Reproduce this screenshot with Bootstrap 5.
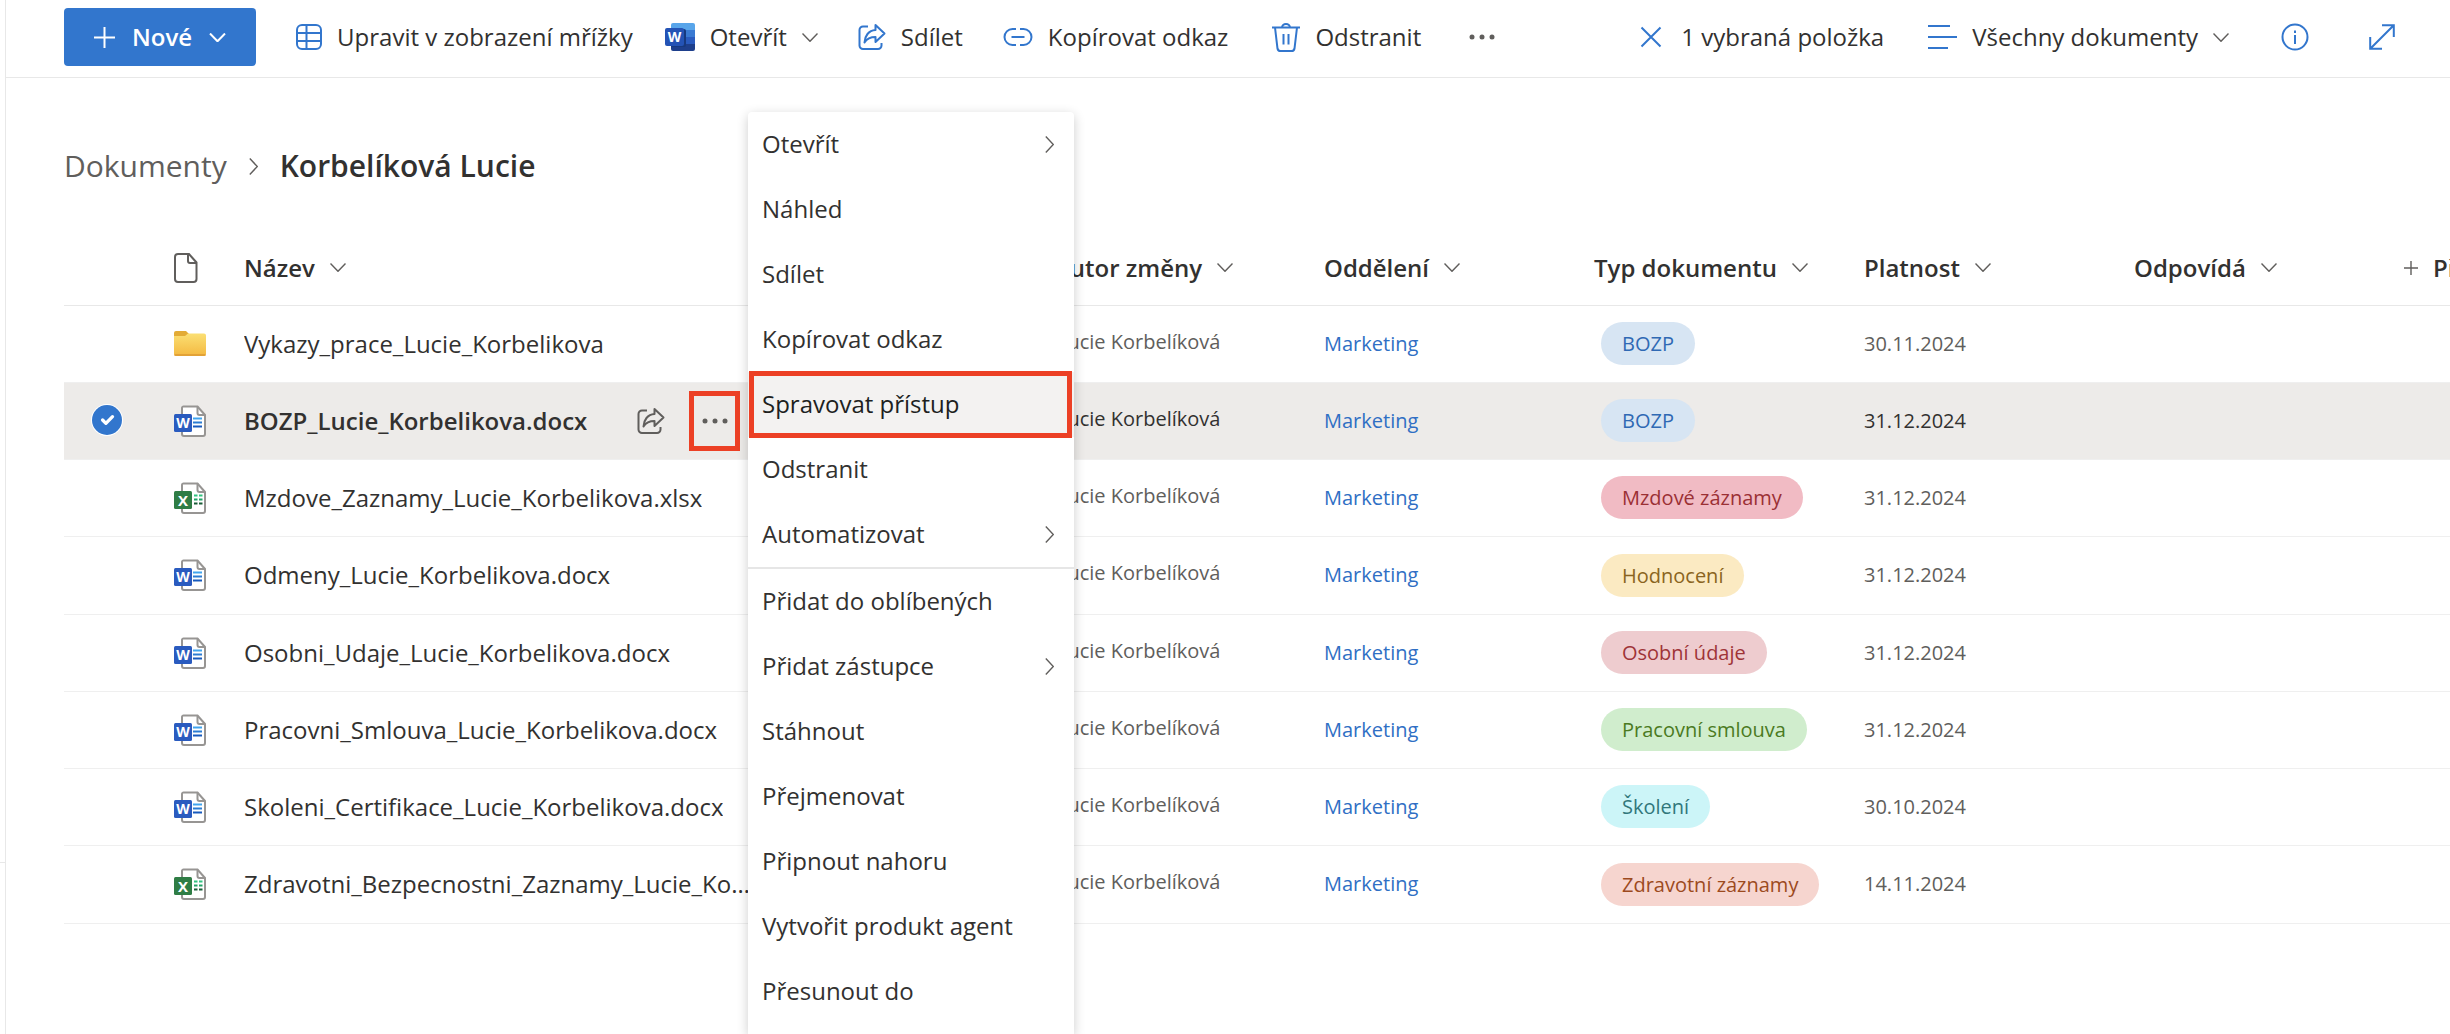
<!DOCTYPE html>
<html lang="cs">
<head>
<meta charset="utf-8">
<meta name="viewport" content="width=device-width, initial-scale=1">
<title>Dokumenty – Korbelíková Lucie</title>
<link href="https://cdn.jsdelivr.net/npm/bootstrap@5.3.0/dist/css/bootstrap.min.css" rel="stylesheet">
<style>
  :root { --accent: #3276cd; --ink: #323130; --ink-soft: #605e5c; --line: #e8e8e8; --callout: #ec4025; }
  body { font-family: "Open Sans", "Noto Sans", sans-serif; font-size: 24px; line-height: 32px; color: var(--ink); background: #fff; }
  svg { display: block; flex: none; overflow: visible; fill: none; stroke: currentColor; stroke-width: 2; }
  .rail { width: 6px; border-right: 1px solid var(--line); }
  .rail-foot { height: 172px; border-top: 1px solid var(--line); }
  .cmdbar { height: 78px; padding: 8px 55px 11px 58px; border-bottom: 1px solid var(--line); font-size: 24px; }
  .cmd { display: flex; align-items: center; gap: 15px; padding: 0; border: 0; background: none; color: var(--ink); white-space: nowrap; }
  .cmd > svg:first-child { color: var(--accent); }
  .chev, .cmd > .chev { color: var(--ink-soft); stroke-width: 1.4; }
  .cmd > .dots:first-child { color: var(--ink-soft); }
  .btn-new { height: 58px; padding: 0 30px; gap: 17px; border-radius: 4px; background: var(--accent); color: #fff; font-weight: 600; }
  .btn-new > svg:first-child, .btn-new > .chev { color: #fff; stroke-width: 2; }
  .cmd-count { gap: 20px; margin-right: 28px; }
  .cmd-view { margin-right: 52px; }
  .cmd-info { margin-right: 60px; }
  .crumbs { padding: 66px 58px 43px; font-size: 30px; line-height: 44px; gap: 22px; }
  .crumbs a { color: var(--ink-soft); text-decoration: none; }
  .files { table-layout: fixed; width: 100%; margin-left: 58px; border-collapse: collapse; white-space: nowrap; }
  .files th, .files td { padding: 0; border-bottom: 1px solid #efefef; vertical-align: middle; }
  .files th { height: 74px; font-weight: 600; border-color: var(--line); }
  .files td { height: 77px; font-size: 20px; color: var(--ink-soft); }
  .files tr:nth-child(4n) td { height: 78px; }
  .files .picked td { background: #edebe9; color: var(--ink); }
  .files a { color: #2f6fc4; text-decoration: none; }
  .col-check { width: 85px; } .col-kind { width: 95px; } .col-title { width: 810px; } .col-meta { width: 270px; }
  .th-in { display: flex; align-items: center; gap: 15px; }
  .title-in { display: flex; align-items: center; width: 508px; font-size: 24px; color: var(--ink); }
  .picked .fname { font-weight: 600; }
  .files td.who { padding: 0 0 4px 3px; }
  .kind { margin-left: 25px; }
  .form-check-input.tick { width: 30px; height: 30px; margin: 0 0 2px 28px; border: 0; border-radius: 50%; display: block; box-shadow: 0 0 0 1px #fff; }
  .form-check-input.tick:checked { background-color: var(--accent); background-size: 22px; }
  .icon-btn { padding: 0; border: 0; background: none; color: var(--ink-soft); }
  .called { width: 51px; height: 60px; margin: 0 12px 0 24px; border: 5px solid var(--callout); display: flex; align-items: center; justify-content: center; }
  .pill { display: inline-block; margin-left: 7px; padding: 6px 21px 5px; border-radius: 22px; line-height: 32px; }
  .p-blue { background: #d7e5f3; color: #2f69b4; } .p-pink { background: #f1bbc4; color: #9b3034; }
  .p-gold { background: #fbeac2; color: #8a6420; } .p-rose { background: #eecccf; color: #9f3437; }
  .p-green { background: #d0edcd; color: #4b7a22; } .p-aqua { background: #ccf5f8; color: #31777b; }
  .p-coral { background: #f6d5cf; color: #9c4a1e; }
  .ctx { position: absolute; left: 748px; top: 112px; bottom: 0; width: 326px; background: #fff; border-radius: 4px 4px 0 0; box-shadow: 0 3px 12px rgba(0,0,0,.2); }
  .ctx button { position: relative; display: flex; align-items: center; justify-content: space-between; width: 100%; height: 65px; padding: 0 20px 1px 14px; border: 0; background: none; color: var(--ink); text-align: left; white-space: nowrap; }
  .ctx hr { margin: 0; border: 0; border-top: 2px solid #e6e6e6; opacity: 1; }
  .ctx button.hot { background: #f3f2f1; color: #201f1e; }
  .ctx button.hot::after { content: ""; position: absolute; inset: -1px 2px -1px 1px; border: 5px solid var(--callout); }
</style>
<script src="https://cdn.jsdelivr.net/npm/bootstrap@5.3.0/dist/js/bootstrap.bundle.min.js"></script>
</head>
<body class="overflow-hidden">
<svg class="d-none" aria-hidden="true">
  <symbol id="i-down" viewBox="0 0 16 9"><path d="M.5.5 8 8.300 15.500.5"/></symbol>
  <symbol id="i-right" viewBox="0 0 9 17"><path d="M.8.5 8.300 8.500.8 16.500"/></symbol>
  <symbol id="i-share" viewBox="0 0 28 26"><path d="M10 2.500H5A3.500 3.500 0 0 0 1.500 6v15.500A3.500 3.500 0 0 0 5 25h15a3.500 3.500 0 0 0 3.500-3.500V19M17.500 1l9 8.500-9 8.500v-5c-5 0-8.500 1.500-11 5.500.3-6.500 4-12 11-12.500z" stroke-linejoin="round"/></symbol>
  <symbol id="i-doc" viewBox="0 0 32 32"><path d="M10 1.500h13.500L31 10v19a2 2 0 0 1-2 2H10a2 2 0 0 1-2-2V3a1.500 1.500 0 0 1 2-1.500z" fill="#fff" stroke="#979593"/><path d="M23.500 1.500V8a2 2 0 0 0 2 2H31" stroke="#979593"/></symbol>
  <symbol id="i-word" viewBox="0 0 32 32"><use href="#i-doc"/><path d="M19 13.500h9" stroke="#41a5ee"/><path d="M19 17.500h9" stroke="#2b7cd3"/><path d="M19 21.500h9" stroke="#185abd"/><rect y="9" width="18" height="18" rx="1.500" fill="#2a5bbf" stroke="none"/><text x="9" y="23" font-family="Open Sans" font-size="14" font-weight="700" text-anchor="middle" fill="#fff" stroke="none">W</text></symbol>
  <symbol id="i-excel" viewBox="0 0 32 32"><use href="#i-doc"/><path d="M20 13.500h3.500M25 13.500h3.500" stroke="#33c481"/><path d="M20 17.500h3.500M25 17.500h3.500" stroke="#21a366"/><path d="M20 21.500h3.500M25 21.500h3.500" stroke="#185c37"/><rect y="9" width="18" height="18" rx="1.500" fill="#2f7d45" stroke="none"/><text x="9" y="23.500" font-family="Open Sans" font-size="15" font-weight="700" text-anchor="middle" fill="#fff" stroke="none">X</text></symbol>
  <symbol id="i-dots" viewBox="0 0 26 6"><g fill="currentColor" stroke="none"><circle cx="3" cy="3" r="2.500"/><circle cx="13" cy="3" r="2.500"/><circle cx="23" cy="3" r="2.500"/></g></symbol>
</svg>
<div class="d-flex vh-100 position-relative">
  <aside class="rail d-flex flex-column justify-content-end flex-shrink-0"><div class="rail-foot"></div></aside>
  <main class="flex-grow-1 overflow-hidden">
    <div class="cmdbar d-flex align-items-center justify-content-between" role="toolbar">
      <div class="d-flex align-items-center">
        <button class="cmd btn-new me-4"><svg width="21" height="21"><path d="M10.500 0v21M0 10.500h21"/></svg>Nové<svg class="chev" width="17" height="9"><use href="#i-down"/></svg></button>
        <button class="cmd ms-3 me-4"><svg width="26" height="26"><rect x="1" y="1" width="24" height="24" rx="5"/><path d="M1 9h24M1 17h24M10.500 1v24"/></svg>Upravit v zobrazení mřížky</button>
        <button class="cmd ms-2 me-3"><svg width="30" height="28"><g stroke="none"><path d="M8 0h20a2 2 0 0 1 2 2v5H6V2a2 2 0 0 1 2-2z" fill="#58a5ea"/><path d="M6 7h24v7H6z" fill="#3a7ad3"/><path d="M6 14h24v7H6z" fill="#2a5bbf"/><path d="M6 21h24v5a2 2 0 0 1-2 2H8a2 2 0 0 1-2-2z" fill="#1e3f8c"/><path d="M6 6h13a2 2 0 0 1 2 2v14a2 2 0 0 1-2 2H6z" fill="#17397f"/><rect y="5" width="19" height="18" rx="2" fill="#2453b5"/><text x="9.500" y="19" font-family="Open Sans" font-size="14" font-weight="700" text-anchor="middle" fill="#fff">W</text></g></svg>Otevřít<svg class="chev" width="16" height="9"><use href="#i-down"/></svg></button>
        <button class="cmd ms-4 me-3"><svg width="28" height="26"><use href="#i-share"/></svg>Sdílet</button>
        <button class="cmd ms-4 me-3"><svg width="30" height="18"><path d="M13 1H9.500a8 8 0 0 0 0 16H13M17 1h3.500a8 8 0 0 1 0 16H17M8.500 9h13"/></svg>Kopírovat odkaz</button>
        <button class="cmd ms-4 me-4 ps-1"><svg width="28" height="29"><path d="M0 4.500h28M10 4.500a4 3.500 0 0 1 8 0M3 4.500l2.500 21A3 3 0 0 0 8.500 28h11a3 3 0 0 0 3-2.500l2.500-21M11.500 11v10.500M16.500 11v10.500"/></svg>Odstranit</button>
        <button class="cmd ms-4" aria-label="Další"><svg class="dots" width="26" height="6"><use href="#i-dots"/></svg></button>
      </div>
      <div class="d-flex align-items-center">
        <button class="cmd cmd-count"><svg width="20" height="20"><path d="M.5.5l19 19M19.500.5l-19 19"/></svg>1 vybraná položka</button>
        <button class="cmd cmd-view ms-3"><svg width="29" height="26"><path d="M0 2h22M0 13h29M0 24h20"/></svg>Všechny dokumenty<svg class="chev" width="16" height="9"><use href="#i-down"/></svg></button>
        <button class="cmd cmd-info" aria-label="Informace"><svg width="28" height="28"><circle cx="14" cy="14" r="12.500"/><path d="M14 12v9M14 7.500v2.500"/></svg></button>
        <button class="cmd" aria-label="Rozbalit"><svg width="26" height="26"><path d="M1.500 24.500l23-23M13 1.200h11.800V13M1.200 13v11.800H13"/></svg></button>
      </div>
    </div>
    <nav class="crumbs d-flex align-items-center" aria-label="Cesta"><a href="#">Dokumenty</a><svg width="9" height="17" class="chev"><use href="#i-right"/></svg><span class="fw-semibold">Korbelíková Lucie</span></nav>
    <table class="files">
      <colgroup><col class="col-check"><col class="col-kind"><col class="col-title"><col class="col-meta"><col class="col-meta"><col class="col-meta"><col class="col-meta"><col class="col-meta"><col></colgroup>
      <thead><tr>
        <th></th>
        <th><svg class="kind" width="24" height="30"><path d="M4 1h11l7.500 8.500V26a3 3 0 0 1-3 3H4a3 3 0 0 1-3-3V4a3 3 0 0 1 3-3zM14 1v7a2 2 0 0 0 2 2h6.500" stroke="#605e5c"/></svg></th>
        <th><span class="th-in">Název<svg class="chev" width="16" height="9"><use href="#i-down"/></svg></span></th>
        <th><span class="th-in">Autor změny<svg class="chev" width="16" height="9"><use href="#i-down"/></svg></span></th>
        <th><span class="th-in">Oddělení<svg class="chev" width="16" height="9"><use href="#i-down"/></svg></span></th>
        <th><span class="th-in">Typ dokumentu<svg class="chev" width="16" height="9"><use href="#i-down"/></svg></span></th>
        <th><span class="th-in">Platnost<svg class="chev" width="16" height="9"><use href="#i-down"/></svg></span></th>
        <th><span class="th-in">Odpovídá<svg class="chev" width="16" height="9"><use href="#i-down"/></svg></span></th>
        <th><span class="th-in"><svg class="chev" width="14" height="14"><path d="M7 0v14M0 7h14"/></svg>Přidat sloupec</span></th>
      </tr></thead>
      <tbody>
        <tr><td></td><td><svg class="kind" width="32" height="25"><g stroke="none"><path d="M0 2a2 2 0 0 1 2-2h10l3 3-2 3H0z" fill="#e3ab35"/><path d="M0 5h11l3-2.500h16a2 2 0 0 1 2 2V23a2 2 0 0 1-2 2H2a2 2 0 0 1-2-2z" fill="url(#fold)"/><path d="M.5 24h31" stroke="#dd9a33" stroke-width="1.500"/></g><defs><linearGradient id="fold" x2="0" y2="1"><stop stop-color="#fbdf73"/><stop offset="1" stop-color="#f4b941"/></linearGradient></defs></svg></td>
          <td><div class="title-in"><span class="fname text-truncate">Vykazy_prace_Lucie_Korbelikova</span></div></td><td class="who">Lucie Korbelíková</td><td><a href="#">Marketing</a></td><td><span class="pill p-blue">BOZP</span></td><td>30.11.2024</td><td></td><td></td></tr>
        <tr class="picked"><td><input class="form-check-input tick" type="checkbox" checked aria-label="Vybrat BOZP_Lucie_Korbelikova.docx"></td><td><svg class="kind" width="32" height="32"><use href="#i-word"/></svg></td>
          <td><div class="title-in"><span class="fname text-truncate me-auto">BOZP_Lucie_Korbelikova.docx</span><button class="icon-btn" aria-label="Sdílet"><svg width="28" height="26"><use href="#i-share"/></svg></button><button class="icon-btn called" aria-label="Další akce"><svg width="26" height="6"><use href="#i-dots"/></svg></button></div></td><td class="who">Lucie Korbelíková</td><td><a href="#">Marketing</a></td><td><span class="pill p-blue">BOZP</span></td><td>31.12.2024</td><td></td><td></td></tr>
        <tr><td></td><td><svg class="kind" width="32" height="32"><use href="#i-excel"/></svg></td>
          <td><div class="title-in"><span class="fname text-truncate">Mzdove_Zaznamy_Lucie_Korbelikova.xlsx</span></div></td><td class="who">Lucie Korbelíková</td><td><a href="#">Marketing</a></td><td><span class="pill p-pink">Mzdové záznamy</span></td><td>31.12.2024</td><td></td><td></td></tr>
        <tr><td></td><td><svg class="kind" width="32" height="32"><use href="#i-word"/></svg></td>
          <td><div class="title-in"><span class="fname text-truncate">Odmeny_Lucie_Korbelikova.docx</span></div></td><td class="who">Lucie Korbelíková</td><td><a href="#">Marketing</a></td><td><span class="pill p-gold">Hodnocení</span></td><td>31.12.2024</td><td></td><td></td></tr>
        <tr><td></td><td><svg class="kind" width="32" height="32"><use href="#i-word"/></svg></td>
          <td><div class="title-in"><span class="fname text-truncate">Osobni_Udaje_Lucie_Korbelikova.docx</span></div></td><td class="who">Lucie Korbelíková</td><td><a href="#">Marketing</a></td><td><span class="pill p-rose">Osobní údaje</span></td><td>31.12.2024</td><td></td><td></td></tr>
        <tr><td></td><td><svg class="kind" width="32" height="32"><use href="#i-word"/></svg></td>
          <td><div class="title-in"><span class="fname text-truncate">Pracovni_Smlouva_Lucie_Korbelikova.docx</span></div></td><td class="who">Lucie Korbelíková</td><td><a href="#">Marketing</a></td><td><span class="pill p-green">Pracovní smlouva</span></td><td>31.12.2024</td><td></td><td></td></tr>
        <tr><td></td><td><svg class="kind" width="32" height="32"><use href="#i-word"/></svg></td>
          <td><div class="title-in"><span class="fname text-truncate">Skoleni_Certifikace_Lucie_Korbelikova.docx</span></div></td><td class="who">Lucie Korbelíková</td><td><a href="#">Marketing</a></td><td><span class="pill p-aqua">Školení</span></td><td>30.10.2024</td><td></td><td></td></tr>
        <tr><td></td><td><svg class="kind" width="32" height="32"><use href="#i-excel"/></svg></td>
          <td><div class="title-in"><span class="fname text-truncate">Zdravotni_Bezpecnostni_Zaznamy_Lucie_Korbelikova.xlsx</span></div></td><td class="who">Lucie Korbelíková</td><td><a href="#">Marketing</a></td><td><span class="pill p-coral">Zdravotní záznamy</span></td><td>14.11.2024</td><td></td><td></td></tr>
      </tbody>
    </table>
  </main>
  <div class="ctx" role="menu">
    <button role="menuitem">Otevřít<svg class="chev" width="9" height="17"><use href="#i-right"/></svg></button>
    <button role="menuitem">Náhled</button>
    <button role="menuitem">Sdílet</button>
    <button role="menuitem">Kopírovat odkaz</button>
    <button role="menuitem" class="hot">Spravovat přístup</button>
    <button role="menuitem">Odstranit</button>
    <button role="menuitem">Automatizovat<svg class="chev" width="9" height="17"><use href="#i-right"/></svg></button>
    <hr>
    <button role="menuitem">Přidat do oblíbených</button>
    <button role="menuitem">Přidat zástupce<svg class="chev" width="9" height="17"><use href="#i-right"/></svg></button>
    <button role="menuitem">Stáhnout</button>
    <button role="menuitem">Přejmenovat</button>
    <button role="menuitem">Připnout nahoru</button>
    <button role="menuitem">Vytvořit produkt agent</button>
    <button role="menuitem">Přesunout do</button>
  </div>
</div>
</body>
</html>
